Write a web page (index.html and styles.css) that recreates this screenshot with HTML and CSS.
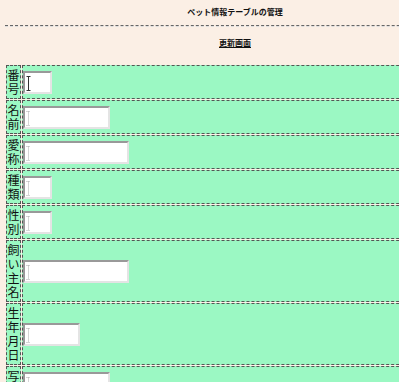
FILE: index.html
```html
<!DOCTYPE html>
<html lang="ja">
<head>
    <meta charset="UTF-8">
    <title>ペット情報テーブルの管理</title>
    <link rel="stylesheet" href="styles.css">
</head>
<body>
    <div class="page">
        <h1 class="title">ペット情報テーブルの管理</h1>
        <hr class="rule">
        <h2 class="subtitle">更新画面</h2>

        <!-- 更新フォーム -->
        <table class="pet-form">
            <tr>
                <td class="label">番号</td>
                <td class="field">
                    <span class="box w-xs">
                        <svg class="caret solid" width="5" height="15" viewBox="0 0 5 15"><path d="M0.5 0.5h4M2.5 0.5v14M0.5 14.5h4"/></svg>
                    </span>
                </td>
            </tr>
            <tr>
                <td class="label">名前</td>
                <td class="field">
                    <span class="box w-md">
                        <svg class="caret" width="5" height="15" viewBox="0 0 5 15"><path d="M0.5 0.5h4M2.5 0.5v14M0.5 14.5h4"/></svg>
                    </span>
                </td>
            </tr>
            <tr>
                <td class="label">愛称</td>
                <td class="field">
                    <span class="box w-lg">
                        <svg class="caret" width="5" height="15" viewBox="0 0 5 15"><path d="M0.5 0.5h4M2.5 0.5v14M0.5 14.5h4"/></svg>
                    </span>
                </td>
            </tr>
            <tr>
                <td class="label">種類</td>
                <td class="field">
                    <span class="box w-xs">
                        <svg class="caret" width="5" height="15" viewBox="0 0 5 15"><path d="M0.5 0.5h4M2.5 0.5v14M0.5 14.5h4"/></svg>
                    </span>
                </td>
            </tr>
            <tr>
                <td class="label">性別</td>
                <td class="field">
                    <span class="box w-xs">
                        <svg class="caret" width="5" height="15" viewBox="0 0 5 15"><path d="M0.5 0.5h4M2.5 0.5v14M0.5 14.5h4"/></svg>
                    </span>
                </td>
            </tr>
            <tr>
                <td class="label">飼い主名</td>
                <td class="field">
                    <span class="box w-lg">
                        <svg class="caret" width="5" height="15" viewBox="0 0 5 15"><path d="M0.5 0.5h4M2.5 0.5v14M0.5 14.5h4"/></svg>
                    </span>
                </td>
            </tr>
            <tr>
                <td class="label">生年月日</td>
                <td class="field">
                    <span class="box w-sm">
                        <svg class="caret" width="5" height="15" viewBox="0 0 5 15"><path d="M0.5 0.5h4M2.5 0.5v14M0.5 14.5h4"/></svg>
                    </span>
                </td>
            </tr>
            <tr>
                <td class="label">写真</td>
                <td class="field">
                    <span class="box w-md">
                        <svg class="caret" width="5" height="15" viewBox="0 0 5 15"><path d="M0.5 0.5h4M2.5 0.5v14M0.5 14.5h4"/></svg>
                    </span>
                </td>
            </tr>
        </table>
    </div>
</body>
</html>
```

FILE: styles.css
```css
body {
    margin: 0;
    padding: 0;
    background-color: #fbefe5; /* ベージュの背景 */
    font-family: "Noto Sans CJK JP", "Noto Sans", sans-serif;
    color: #111;
}
.page {
    width: 460px;
    padding: 0 5px;
}
.title {
    margin: 0;
    padding-top: 7px;
    font-size: 8px;
    line-height: 10px;
    font-weight: bold;
    text-align: center;
}
.rule {
    margin: 8px 0 0;
    height: 0;
    border: none;
    border-top: 1px dashed #666;
    border-bottom: 1px dashed #ddd;
}
.subtitle {
    margin: 11px 0 0;
    font-size: 8px;
    line-height: 10px;
    font-weight: bold;
    text-align: center;
    text-decoration: underline;
}
/* フォームのテーブル */
.pet-form {
    margin-top: 16px;
    width: 100%;
    border-collapse: separate;
    border-spacing: 1px;
}
.pet-form td {
    background-color: #9bf8c3; /* ミントグリーン */
    border: 1px dashed #555;
}
.label {
    width: 13px;
    padding: 2px 0;
    font-size: 12px;
    line-height: 14px;
    text-align: center;
    vertical-align: middle;
    word-break: break-all;
}
.field {
    padding: 1px 1px 1px 0;
    vertical-align: middle;
}
.box {
    display: block;
    position: relative;
    height: 19px;
    background-color: #fff;
    border: 2px solid;
    border-color: #999 #e4e4e4 #e4e4e4 #999;
}
.w-xs { width: 25px; }
.w-sm { width: 53px; }
.w-md { width: 83px; }
.w-lg { width: 102px; }
.caret {
    position: absolute;
    left: 1px;
    top: 3px;
    fill: none;
    stroke: #aaa;
    stroke-dasharray: 1 1;
}
.caret.solid {
    stroke: #333;
    stroke-dasharray: none;
}
```
